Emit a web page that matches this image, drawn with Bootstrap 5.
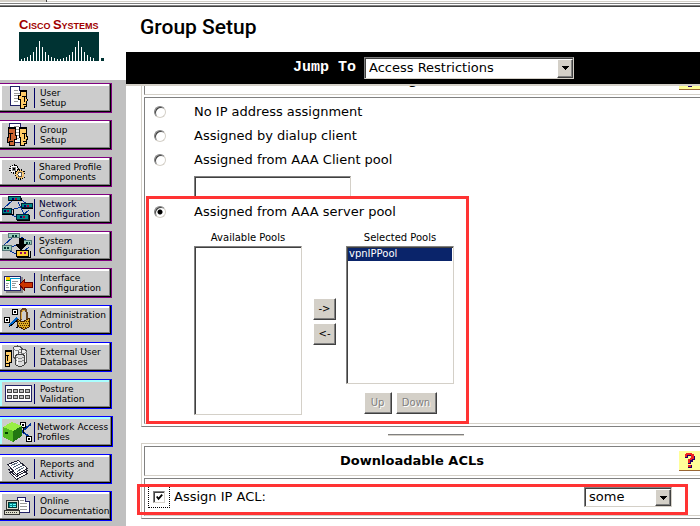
<!DOCTYPE html>
<html lang="en">
<head>
<meta charset="utf-8">
<meta name="viewport" content="width=device-width, initial-scale=1">
<title>Group Setup</title>
<link href="https://cdn.jsdelivr.net/npm/bootstrap@5.3.0/dist/css/bootstrap.min.css" rel="stylesheet">
<style>
:root{--face:#d4d0c8;--shade:#808080;--deep:#404040;--mark:#ff3333}
body{font:13px/16px "DejaVu Sans",Verdana,sans-serif;color:#000;background:#fff;overflow:hidden}
svg{shape-rendering:crispEdges;display:block}
.chrome-edge{height:7px;background:linear-gradient(#fff 1px,var(--face) 1px 2px,#fff 2px 3px,var(--shade) 3px 4px,#fff 4px 5px,var(--shade) 5px 6px,var(--deep) 6px)}
.chrome-tab{width:47px;height:2px;background:var(--face);border-right:1px solid var(--deep)}
.side{width:126px;background:silver}
.brand{height:73px;padding:10px 0 0 19px;background:#fff}
.brand-name{height:15px;font:bold 9px/15px "Liberation Sans",sans-serif;color:#a00000;white-space:nowrap}
.brand-name b{font-size:13px}
.menu{padding-top:3px;gap:7px}
.tile{width:112px;height:30px;padding:0;border:1px solid #800080;border-left:0;background:#ccc;color:#000;font-size:9px;line-height:10px;text-align:left;text-decoration:none;box-shadow:inset -1px -1px #000,inset -2px -2px #808080,inset 2px 2px #fff}
.tile.blue{border-color:#00f}
.tile.current{width:113px;height:31px}
.tile.teal{box-shadow:inset -1px -1px #000,inset -2px -2px #808080,inset 2px 2px #aff}
.tile.navy{color:#003}
.tile svg{flex:none;width:34px;height:28px}
.tile span{border-left:1px solid #000066;padding-left:5px;white-space:nowrap}
.tile .near{padding-left:2px}
.title{height:45px;padding:7px 0 0 14px;font:500 21px/26px Roboto,sans-serif;margin:0}
.jump{height:34px;padding-left:167px;background:#000;border-bottom:2px solid var(--face);gap:8px}
.jump label{font:bold 15px/20px "Liberation Mono",monospace;color:#fff}
.sunken{border:1px solid;border-color:var(--shade) var(--face) var(--face) var(--shade);border-radius:0;background:#fff;box-shadow:inset 1px 1px var(--deep);outline:0}
.drop{position:relative}
.drop select{appearance:none;display:block;width:100%;height:22px;padding:0 20px 0 4px;color:#000}
.drop::after{content:"";position:absolute;right:1px;top:2px;bottom:1px;width:16px;border:1px solid;border-color:#fff var(--deep) var(--deep) #fff;background:linear-gradient(#000,#000) 4px 6px/7px 1px no-repeat,linear-gradient(#000,#000) 5px 7px/5px 1px no-repeat,linear-gradient(#000,#000) 6px 8px/3px 1px no-repeat,linear-gradient(#000,#000) 7px 9px/1px 1px no-repeat,var(--face);box-shadow:inset -1px -1px var(--shade);pointer-events:none}
.drop-jump{width:210px}
.drop-acl{width:88px}
.drop-acl select{height:20px}
.work{padding-left:15px;overflow:hidden}
.panel{border:1px solid;border-color:var(--face) transparent var(--shade) var(--face);border-right:0;padding:2px 0 2px 2px}
.panel-first{margin-top:-24px}
.cell{border:1px solid;border-color:var(--shade) transparent var(--face) var(--shade);border-right:0}
.head{height:30px;font-weight:bold}
.help{width:21px;height:20px;background:#ff9;border:0;border-bottom:1px solid #996633;padding:0}
.body-cell{margin-top:2px}
.pools{padding:2px 0 8px 9px}
.choice{height:24px;gap:28px}
.choice input{appearance:none;width:12px;height:12px;margin:0;border:1px solid;border-color:var(--shade) var(--face) var(--face) var(--shade);border-radius:50%;box-shadow:inset 1px 1px var(--deep)}
.choice input:checked{background:radial-gradient(circle,#000 2px,#fff 3px)}
.indent{margin-left:40px}
.pool-name{width:157px;height:21px}
.caption{font-size:10px;line-height:12px;height:14px;text-align:center}
.server{margin-top:3px}
.pool{width:108px}
.pool select{appearance:none;width:108px;overflow:hidden;padding:1px;font-size:10px;color:#000}
.pool option{padding:0 1px;min-height:13px;line-height:13px}
.pool option:checked{background:#0a246a linear-gradient(#0a246a,#0a246a);color:#fff}
.tall{height:169px}
.short{height:138px}
.arrows{width:23px;margin:0 10px 0 11px;padding-top:66px;gap:3px}
.push{height:22px;padding:0;border:1px solid;border-color:#fff var(--deep) var(--deep) #fff;border-radius:0;background:var(--face);box-shadow:inset -1px -1px var(--shade);font-size:10px;line-height:14px;color:#000}
.push:disabled{color:var(--shade);text-shadow:1px 1px #fff}
.up{width:28px}
.down{width:41px}
.ring{position:absolute;border:3px solid var(--mark);pointer-events:none}
.ring-pools{left:-8px;top:-4px;width:323px;height:228px}
.ring-acl{left:-8px;right:12px;top:5px;bottom:0}
.rule-wrap{margin-right:-10px}
.rule{width:76px;height:2px;margin:7px auto;border:0;border-top:1px solid var(--shade);border-bottom:1px solid var(--face);opacity:1}
.acl{height:38px;padding:0 28px 0 3px}
.focus-box{width:22px;height:22px;border:1px dotted #000}
.focus-box input{appearance:none;width:12px;height:12px;margin:0;border:1px solid;border-color:var(--shade) var(--face) var(--face) var(--shade);box-shadow:inset 1px 1px var(--deep)}
.focus-box input:checked{background:url("data:image/svg+xml,%3Csvg xmlns='http://www.w3.org/2000/svg' viewBox='0 0 11 11'%3E%3Cpath d='M3 5l2 2.500L9 3' fill='none' stroke='black' stroke-width='2'/%3E%3C/svg%3E")}
</style>
</head>
<body>
<div class="chrome-edge"><div class="chrome-tab"></div></div>
<div class="d-flex min-vh-100">
<aside class="side flex-shrink-0">
  <div class="brand">
    <div class="brand-name"><b>C</b>ISCO <b>S</b>YSTEMS</div>
    <svg width="86" height="29" viewBox="0 0 86 29" aria-label="Bridge logo"><path fill="#033" d="M0 0h80v29H0zM82 26h3v3h-3z"/><path stroke="#fff" d="M2.500 29v-2m3 2v-3m3 3v-4m3 4v-6m3 6v-9m3 9v-14m3 14v-20m3 20v-14m3 14v-9m3 9v-6m3 6v-4m3 4v-3m3 3v-2m3 2v-2m3 2v-3m3 3v-4m3 4v-6m3 6v-9m3 9v-14m3 14v-20m3 20v-14m3 14v-9m3 9v-6m3 6v-4m3 4v-3"/></svg>
  </div>
  <nav class="menu d-flex flex-column">
    <a href="#" class="tile d-flex align-items-center"><svg viewBox="0 0 34 28"><path fill="#fff" stroke="#226" d="M10.500 2.500h9l4 4v15h-13z"/><path stroke="#226" fill="#ccd" d="M19.500 2.500v4h4"/><path stroke="#999" d="M14 6.500h4m-4 3h6m-6 2h5m-5 3h5m-5 3h4"/><path fill="#fc6" stroke="#000" d="M20.500 6.500h6v7l1 3-1 1v5h-2v2h-4v-9h-2v-4h2z"/><path stroke="#000" d="M20 7.500h6M22 12.500h5M24.500 13v5M23 20.500h3"/></svg><span>User<br>Setup</span></a>
    <a href="#" class="tile d-flex align-items-center"><svg viewBox="0 0 34 28"><path fill="#fff" stroke="#226" d="M9.500 2.500h11l5 5v14h-16z"/><path stroke="#226" fill="#ccd" d="M20.500 2.500v5h5"/><path stroke="#999" d="M14 5.500h5m-5 3h5m-3 3h3m-3 3h3m-3 3h3"/><path fill="#c63" stroke="#000" d="M8.500 6.500h7v8h1v4h-2v6h-5v-3h-2v-5h1z"/><path fill="#fc6" stroke="#000" d="M19.500 6.500h7v9h1v3h-1v4h-2v2h-4v-8h-1z"/><path stroke="#000" d="M8 7.500h7M8 12.500h5M10.500 13v6M9 20.500h4M20 7.500h6M22 12.500h5M24.500 13v5M23 20.500h3"/></svg><span>Group<br>Setup</span></a>
    <a href="#" class="tile d-flex align-items-center"><svg viewBox="0 0 34 28"><circle cx="14" cy="11" r="4" fill="#ddd" stroke="#000" stroke-width="2" stroke-dasharray="1 1"/><circle cx="14" cy="11" r="3" fill="#888" stroke="#fff"/><path d="M13 10h2v2h-2z"/><circle cx="20" cy="16.500" r="4.500" fill="#ffd58a" stroke="#000" stroke-width="2" stroke-dasharray="1 1"/><circle cx="20" cy="16.500" r="3.500" fill="none" stroke="#eb6"/><circle cx="20" cy="16.500" r="2" fill="#fff" stroke="#555"/></svg><span class="ps-1">Shared Profile<br>Components</span></a>
    <a href="#" class="tile navy d-flex align-items-center"><svg viewBox="0 0 34 28"><path fill="none" stroke="#039" d="M12 6L4 13M18 7l7 14M21 5l5 3M10 15l12-3M10 19l8 4M29 15l-6 5"/><path fill="#088" stroke="#023" d="M8.500 1.500h12v4h-12zM21.500 8.500h11v4h-11zM2.500 13.500h9v5h-9zM16.500 19.500h12v5h-12z"/><path fill="#000" d="M9 6h13V3h-1v2H9zM22 13h11v1H22zM2 19h11v-5h1v6H2zM17 25h12v-5h1v6H17z"/><path fill="#006" d="M12 3h2v2h-2zM24 10h2v2h-2zM4 15h2v2H4zM20 21h2v2h-2z"/><path fill="#a03" d="M15 3h2v2h-2zM27 10h2v2h-2zM7 15h2v2H7zM23 21h2v2h-2z"/></svg><span class="ps-1">Network<br>Configuration</span></a>
    <a href="#" class="tile d-flex align-items-center"><svg viewBox="0 0 34 28"><path fill="none" stroke="#039" d="M12 6L4 13M21 5l5 3M10 15l12-3M10 19l8 4M29 15l-6 5"/><path fill="#9cb" stroke="#577" d="M8.500 1.500h11v4h-11zM21.500 8.500h10v4h-10zM2.500 13.500h9v5h-9z"/><path fill="#033" d="M12 3h2v2h-2zM15 3h2v2h-2zM26 10h2v2h-2zM29 10h1v2h-1zM4 15h2v2H4zM7 15h2v2H7z"/><path fill="#000" d="M19 6h5v6h3v1h-1v1h-1v1h-1v1h-1v1h-1v1h-2v-1h-1v-1h-1v-1h-1v-1h-1v-2h3z"/><path fill="#fc3" stroke="#000" d="M16.500 18.500h12v6h-12z"/><path d="M17 25h13v-6h1v7H17z"/><path fill="#906" d="M20 20h2v2h-2zM24 20h2v2h-2z"/></svg><span class="ps-1">System<br>Configuration</span></a>
    <a href="#" class="tile d-flex align-items-center"><svg viewBox="0 0 34 28"><path fill="#888" d="M6 8h17v16H6z"/><path fill="#fff" stroke="#226" d="M4.500 7.500h16v14h-16z"/><path fill="#fc0" d="M6 8h4v3H6z"/><path fill="#090" d="M6 11h4v1H6z"/><path stroke="#09c" d="M10 9.500h10M10.500 10v11"/><path stroke="#999" d="M6 14.500h3m-3 2h2m-2 2h3M12 12.500h6m-6 2h4m-4 2h3m-3 2h5"/><path fill="#c30" stroke="#600" d="M19.500 15.500l5-5v3h8v5h-8v3z"/></svg><span>Interface<br>Configuration</span></a>
    <a href="#" class="tile blue d-flex align-items-center"><svg viewBox="0 0 34 28"><path fill="#fff" stroke="#000" d="M12.500 3.500h5v5h-5zM4.500 11.500h5v5h-5z"/><path d="M14 5h2v2h-2zM6 13h2v2H6z"/><path stroke="#06c" stroke-width="2" d="M9 20l8-8"/><path stroke="#000" d="M9 21l10-8M16 22l6-4"/><path fill="none" stroke="#642" stroke-width="2" d="M21 14V7q0-4 3-4 3 0 3 7v3"/><path fill="none" stroke="#da4" d="M21.500 13V7q1-3 3-3"/><path fill="#da2" stroke="#420" d="M17.500 13.500l5 2 7-3v8l-5 3-7-3z"/><path stroke="#420" stroke-dasharray="1 1" d="M18 15.500h11M19 17.500h10M18 19.500h11M19 21.500h8"/></svg><span>Administration<br>Control</span></a>
    <a href="#" class="tile blue d-flex align-items-center"><svg viewBox="0 0 34 28"><path fill="#eee" stroke="#555" d="M13.500 4.500q4-3 8 0v10q-4 3-8 0zM18.500 7.500q4-3 8 0v12q-4 3-8 0z"/><path fill="#fc6" stroke="#000" d="M5.500 7.500h6v12h-2v4h-4z"/><path stroke="#000" d="M5 8.500h6M5 12.500h4M7.500 13v5M5 20.500h4"/><path fill="#ddd" stroke="#444" d="M15.500 12.500q4-3 9 0v9q-5 4-9 0z"/><path fill="none" stroke="#888" d="M13 6q4 3 8 0M19 9q4 3 8 0M16 14q4 3 8 0M16 17q4 3 8 0"/><path stroke="#fff" d="M17.500 15v6"/></svg><span>External User<br>Databases</span></a>
    <a href="#" class="tile blue teal d-flex align-items-center"><svg viewBox="0 0 34 28"><path fill="#fff" stroke="#226" d="M5.500 5.500h26v16h-26z"/><path fill="#bbb" stroke="#444" d="M7.500 9.500h4v3h-4zM13.500 9.500h4v3h-4zM19.500 9.500h4v3h-4zM25.500 9.500h4v3h-4zM7.500 15.500h4v3h-4zM13.500 15.500h4v3h-4zM19.500 15.500h4v3h-4zM25.500 15.500h4v3h-4z"/></svg><span>Posture<br>Validation</span></a>
    <a href="#" class="tile blue teal current d-flex align-items-center"><svg viewBox="0 0 34 28"><path stroke="#039" stroke-width="2" d="M21 14l10-8M22 13l7 6"/><path stroke="#000" d="M23 8l1 7"/><path fill="#fff" stroke="#000" d="M20.500 4.500h5v5h-5zM26.500 18.500h5v5h-5z"/><path d="M22 6h2v2h-2zM28 20h2v2h-2z"/><path fill="#9e4" d="M3 9l9-5 10 4-9 5z"/><path fill="#5b2" d="M3 9l10 4v11L3 19z"/><path fill="#271" d="M13 13l9-5v10l-9 6z"/><path fill="#040" d="M5 14h3v2H5z"/></svg><span class="near">Network Access<br>Profiles</span></a>
    <a href="#" class="tile blue d-flex align-items-center"><svg viewBox="0 0 34 28"><path fill="#fff" stroke="#223" d="M9.500 17.500l11-4 7 5-11 6zM8.500 14.500l11-4 8 5-11 6z"/><path fill="#fff" stroke="#223" d="M7.500 9.500l11-4 9 8-11 6z"/><path stroke="#567" d="M11 10.500l7-3M13 12.500l8-4M15 14.500l8-4M17 16.500l7-4"/></svg><span>Reports and<br>Activity</span></a>
    <a href="#" class="tile blue d-flex align-items-center"><svg viewBox="0 0 34 28"><path fill="#fff" stroke="#226" d="M17.500 5.500h8l4 4v11h-12z"/><path stroke="#226" fill="#ccd" d="M25.500 5.500v4h4"/><path stroke="#999" d="M20 8.500h4m-4 3h7m-7 3h7m-7 3h7"/><path fill="#ddc" stroke="#333" d="M6.500 8.500h12v9h-12zM4.500 18.500h15v4h-15z"/><path fill="#088" stroke="#033" d="M8.500 10.500h8v5h-8z"/><path stroke="#6ff" d="M10 12.500h2m1 0h3M10 14.500h2m1 0h3"/><path stroke="#333" stroke-dasharray="1 1" d="M6 20.500h12"/></svg><span>Online<br>Documentation</span></a>
  </nav>
</aside>
<main class="flex-grow-1 overflow-hidden">
  <h1 class="title">Group Setup</h1>
  <div class="jump d-flex align-items-center">
    <label for="jump">Jump To</label>
    <div class="drop drop-jump"><select id="jump" class="sunken"><option>Access Restrictions</option></select></div>
  </div>
  <div class="work">
    <section class="panel panel-first">
      <div class="cell head d-flex align-items-center"><div class="flex-grow-1 text-center">IP Assignment</div><button class="help" type="button" aria-label="Help"><svg width="21" height="19" viewBox="0 0 21 19"><path fill="#206" d="M7 3h7v2h2v4h-2v2h-2v2h-3v-4h2V7h1V5H9v2H6V4h1zM9 14h4v3H9z"/><path fill="#e22" d="M7 2h6v1h2v5h-2v1h-2v3H9V8h2V7h1V4H8v2H6V3h1zM9 14h3v2H9z"/></svg></button></div>
      <div class="cell body-cell pools">
        <label class="choice d-flex align-items-center"><input type="radio" name="ip">No IP address assignment</label>
        <label class="choice d-flex align-items-center"><input type="radio" name="ip">Assigned by dialup client</label>
        <label class="choice d-flex align-items-center"><input type="radio" name="ip">Assigned from AAA Client pool</label>
        <input class="sunken pool-name indent d-block mt-1" type="text" aria-label="Client pool name">
        <div class="server position-relative">
          <label class="choice d-flex align-items-center"><input type="radio" name="ip" checked>Assigned from AAA server pool</label>
          <div class="d-flex indent pt-2">
            <div class="pool"><label class="caption d-block" for="avail">Available Pools</label><select id="avail" class="sunken tall d-block" size="12"></select></div>
            <div class="arrows d-flex flex-column"><button class="push" type="button">-&gt;</button><button class="push" type="button">&lt;-</button></div>
            <div class="pool"><label class="caption d-block" for="chosen">Selected Pools</label><select id="chosen" class="sunken short d-block" size="10"><option selected>vpnIPPool</option></select>
              <div class="d-flex gap-1 justify-content-center mt-1 pt-1"><button class="push up" type="button" disabled>Up</button><button class="push down" type="button" disabled>Down</button></div></div>
          </div>
          <div class="ring ring-pools"></div>
        </div>
      </div>
    </section>
    <div class="rule-wrap"><hr class="rule"></div>
    <section class="panel">
      <div class="cell head d-flex align-items-center"><div class="flex-grow-1 text-center">Downloadable ACLs</div><button class="help" type="button" aria-label="Help"><svg width="21" height="19" viewBox="0 0 21 19"><path fill="#206" d="M7 3h7v2h2v4h-2v2h-2v2h-3v-4h2V7h1V5H9v2H6V4h1zM9 14h4v3H9z"/><path fill="#e22" d="M7 2h6v1h2v5h-2v1h-2v3H9V8h2V7h1V4H8v2H6V3h1zM9 14h3v2H9z"/></svg></button></div>
      <div class="cell body-cell acl d-flex align-items-center position-relative">
        <div class="focus-box d-flex align-items-center justify-content-center"><input id="acl" type="checkbox" checked></div>
        <label class="ps-1 flex-grow-1" for="acl">Assign IP ACL:</label>
        <div class="drop drop-acl"><select class="sunken" aria-label="ACL name"><option>some</option></select></div>
        <div class="ring ring-acl"></div>
      </div>
    </section>
  </div>
</main>
</div>
<script src="https://cdn.jsdelivr.net/npm/bootstrap@5.3.0/dist/js/bootstrap.bundle.min.js"></script>
</body>
</html>
